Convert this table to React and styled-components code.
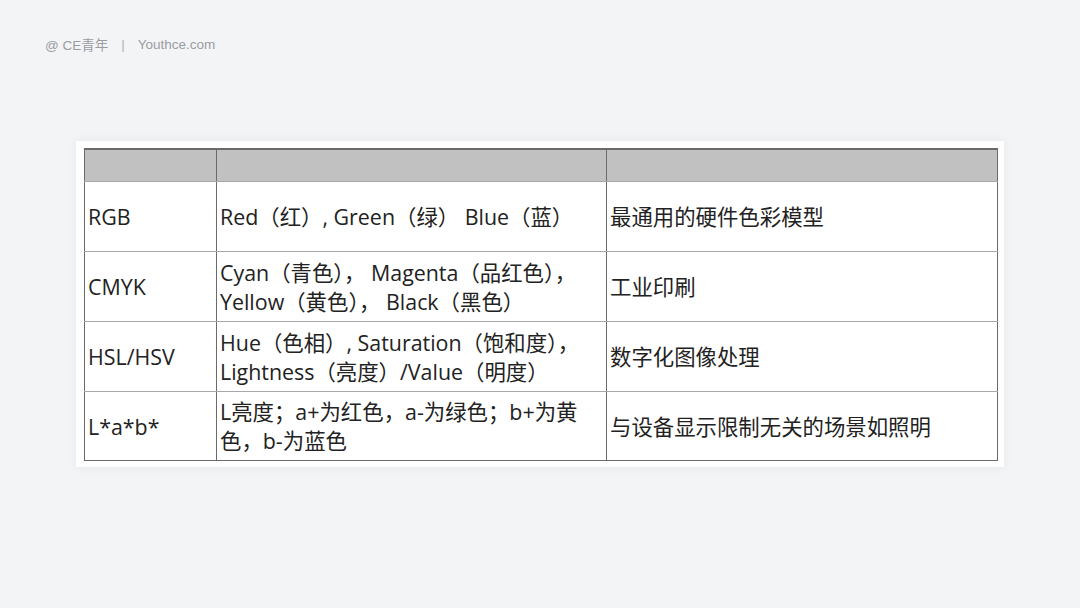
import React from "react";
import styled, { createGlobalStyle } from "styled-components";

const Global = createGlobalStyle`
  html, body { margin: 0; padding: 0; background: #f3f4f6; }
  body { width: 1080px; height: 608px; overflow: hidden; }
`;

const Page = styled.div`
  width: 1080px;
  height: 608px;
  box-sizing: border-box;
  padding: 34px 0 0 45px;
  background: #f3f4f6;
  font-family: "Open Sans", "Noto Sans CJK SC", sans-serif;
`;

const Credit = styled.div`
  display: flex;
  align-items: center;
  gap: 11px;
  font-size: 13.5px;
  color: #9a9ca3;
  height: 20px;
  font-family: "Liberation Sans", "Noto Sans CJK SC", sans-serif;
`;

const Sep = styled.span`
  color: #b0b2b8;
  padding: 0 2px;
`;

const Card = styled.div`
  margin: 87px 0 0 31px;
  width: 928px;
  box-sizing: border-box;
  padding: 7px 7px 6px 8px;
  background: #ffffff;
  box-shadow: 0 0 10px rgba(0, 0, 0, 0.06);
`;

const Table = styled.table`
  width: 913px;
  border-collapse: collapse;
  table-layout: fixed;
  border: 1px solid #6a6a6a;
  font-family: "Open Sans", "Noto Sans CJK SC", sans-serif;
  font-size: 21.4px;
  color: #222222;
`;

const HeadCell = styled.th`
  height: 31px;
  padding: 0;
  background: #c1c1c1;
  border-top: 2px solid #6a6a6a;
  border-bottom: 1px solid #a8a8a8;
  border-left: 1px solid #6a6a6a;
  border-right: 1px solid #6a6a6a;
`;

const Cell = styled.td`
  height: ${(p) => (p.$last ? "68px" : "69px")};
  padding: 0 2px 0 3px;
  vertical-align: middle;
  line-height: 29px;
  white-space: nowrap;
  border-top: 1px solid #a8a8a8;
  border-bottom: 1px solid ${(p) => (p.$last ? "#6a6a6a" : "#a8a8a8")};
  border-left: 1px solid #6a6a6a;
  border-right: 1px solid #6a6a6a;
`;

const rows = [
  { name: "RGB", comp: ["Red（红）, Green（绿） Blue（蓝）"], use: "最通用的硬件色彩模型" },
  { name: "CMYK", comp: ["Cyan（青色）， Magenta（品红色），", "Yellow（黄色）， Black（黑色）"], use: "工业印刷" },
  { name: "HSL/HSV", comp: ["Hue（色相）, Saturation（饱和度），", "Lightness（亮度）/Value（明度）"], use: "数字化图像处理" },
  { name: "L*a*b*", comp: ["L亮度；a+为红色，a-为绿色；b+为黄", "色，b-为蓝色"], use: "与设备显示限制无关的场景如照明" },
];

export default function App() {
  return (
    <Page>
      <Global />
      <Credit>
        <span>@ CE青年</span>
        <Sep>|</Sep>
        <span>Youthce.com</span>
      </Credit>
      <Card>
        <Table>
          <colgroup>
            <col style={{ width: 132 }} />
            <col style={{ width: 390 }} />
            <col style={{ width: 391 }} />
          </colgroup>
          <thead>
            <tr>
              <HeadCell />
              <HeadCell />
              <HeadCell />
            </tr>
          </thead>
          <tbody>
            {rows.map((r, i) => {
              const last = i === rows.length - 1;
              return (
                <tr key={r.name}>
                  <Cell $last={last}>{r.name}</Cell>
                  <Cell $last={last}>
                    {r.comp.map((line, j) => (
                      <React.Fragment key={j}>
                        {j > 0 && <br />}
                        {line}
                      </React.Fragment>
                    ))}
                  </Cell>
                  <Cell $last={last}>{r.use}</Cell>
                </tr>
              );
            })}
          </tbody>
        </Table>
      </Card>
    </Page>
  );
}
